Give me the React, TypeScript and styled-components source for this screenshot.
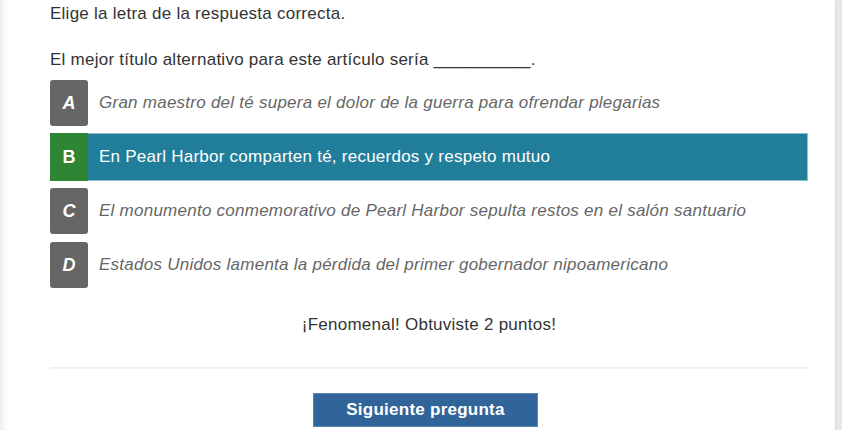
import React from "react";
import styled, { createGlobalStyle } from "styled-components";

const Global = createGlobalStyle`
  html, body { margin: 0; padding: 0; }
  body {
    background: #e8e8e8;
    font-family: "Liberation Sans", Arial, sans-serif;
    font-size: 17px;
    letter-spacing: 0.25px;
    line-height: 22.86px;
    color: #333;
    overflow: hidden;
  }
`;

const Card = styled.div`
  width: 835px;
  height: 430px;
  box-sizing: border-box;
  background: #fff;
  padding: 3px 27px 0 50px;
  box-shadow: inset 7px 0 6px -5px rgba(0, 0, 0, 0.1), 1px 0 2px rgba(0, 0, 0, 0.08);
  overflow: hidden;
`;

const Instruction = styled.p`
  margin: 0 0 23.5px;
`;

const Question = styled.p`
  margin: 0 0 7px;
`;

const Options = styled.div`
  display: flex;
  flex-direction: column;
  gap: 6px;
`;

const Option = styled.div<{ $selected?: boolean }>`
  display: flex;
  align-items: stretch;
  height: 48px;
  box-sizing: border-box;
  background: ${(p) => (p.$selected ? "#217e9b" : "transparent")};
  border: 1px solid ${(p) => (p.$selected ? "#8cc3d4" : "transparent")};
  border-left: none;
  font-style: ${(p) => (p.$selected ? "normal" : "italic")};
`;

const Letter = styled.div<{ $selected?: boolean }>`
  width: 38px;
  flex: none;
  display: flex;
  align-items: center;
  justify-content: center;
  background: ${(p) => (p.$selected ? "#2e8533" : "#666")};
  border-radius: ${(p) => (p.$selected ? "0" : "3px")};
  color: #fff;
  font-weight: bold;
  font-size: 18px;
  margin: ${(p) => (p.$selected ? "-1px 0" : "0")};
`;

const OptionText = styled.div<{ $selected?: boolean }>`
  display: flex;
  align-items: center;
  padding-left: 11px;
  color: ${(p) => (p.$selected ? "#fff" : "#666")};
`;

const Feedback = styled.p`
  margin: 25px 0 0;
  text-align: center;
`;

const Divider = styled.hr`
  margin: 30px 0 0;
  border: none;
  height: 2px;
  background: linear-gradient(#ececec, #f6f6f6);
`;

const ButtonRow = styled.div`
  display: flex;
  justify-content: center;
  padding: 24px 7px 0 0;
`;

const NextButton = styled.button`
  width: 225px;
  height: 34px;
  background: #31659a;
  border: 1px solid #5a86b3;
  color: #fff;
  font-family: "Liberation Sans", Arial, sans-serif;
  font-weight: bold;
  font-size: 17px;
  letter-spacing: 0.25px;
  padding: 0;
  cursor: pointer;
`;

const options = [
  { l: "A", t: "Gran maestro del té supera el dolor de la guerra para ofrendar plegarias" },
  { l: "B", t: "En Pearl Harbor comparten té, recuerdos y respeto mutuo", selected: true },
  { l: "C", t: "El monumento conmemorativo de Pearl Harbor sepulta restos en el salón santuario" },
  { l: "D", t: "Estados Unidos lamenta la pérdida del primer gobernador nipoamericano" },
];

export default function App() {
  return (
    <>
      <Global />
      <Card>
        <Instruction>Elige la letra de la respuesta correcta.</Instruction>
        <Question>El mejor título alternativo para este artículo sería __________.</Question>
        <Options>
          {options.map((o) => (
            <Option key={o.l} $selected={o.selected}>
              <Letter $selected={o.selected}>{o.l}</Letter>
              <OptionText $selected={o.selected}>{o.t}</OptionText>
            </Option>
          ))}
        </Options>
        <Feedback>¡Fenomenal! Obtuviste 2 puntos!</Feedback>
        <Divider />
        <ButtonRow>
          <NextButton>Siguiente pregunta</NextButton>
        </ButtonRow>
      </Card>
    </>
  );
}
